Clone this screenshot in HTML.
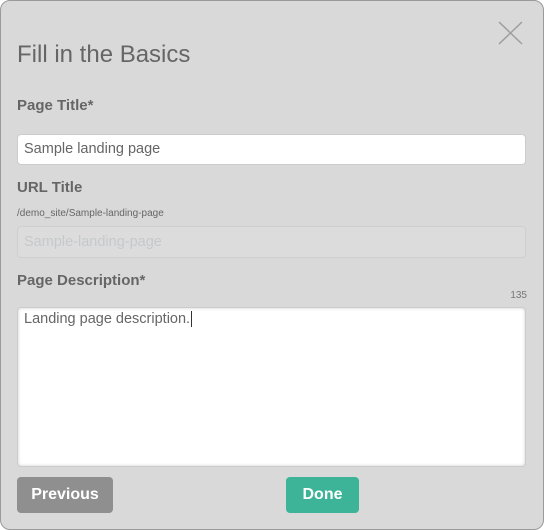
<!DOCTYPE html>
<html><head><style>
*{box-sizing:border-box;margin:0;padding:0}
body{width:544px;height:530px;background:#fff;font-family:"Liberation Sans",Arial,sans-serif;overflow:hidden}
.m{position:absolute;left:0;top:0;width:544px;height:530px;background:#d9d9d9;border:1px solid #9a9a9a;border-radius:10px}
.a{position:absolute}
h1{position:absolute;left:16px;top:40px;font-size:24px;font-weight:normal;color:#666}
.l{position:absolute;left:16px;font-size:15px;font-weight:bold;color:#666}
.in{position:absolute;left:16px;width:509px;border:1px solid #ccc;border-radius:4px;background:#fff;font-size:14.5px;color:#666;padding-left:6px}
.btn{position:absolute;top:476px;height:36px;border-radius:4px;color:#fff;font-weight:bold;font-size:16px;text-align:center;line-height:36px}
</style></head><body>
<div class="m">
<svg class="a" style="left:497px;top:20px" width="26" height="24"><path d="M1 1L24 23M24 1L1 23" stroke="#9e9e9e" stroke-width="1.5"/></svg>
<h1>Fill in the Basics</h1>
<div class="l" style="top:96px">Page Title*</div>
<div class="in" style="top:133px;height:31px;line-height:29px">Sample landing page</div>
<div class="l" style="top:178px">URL Title</div>
<div class="a" style="left:16px;top:207px;font-size:10px;color:#666">/demo_site/Sample-landing-page</div>
<div class="in" style="top:225px;height:32px;line-height:30px;background:#dcdcdc;color:#c6c9cb;border-color:#cfcfcf">Sample-landing-page</div>
<div class="l" style="top:271px">Page Description*</div>
<div class="a" style="right:16px;top:289px;font-size:10px;color:#777">135</div>
<div class="in" style="top:306px;height:160px;line-height:20px;padding-top:1px;box-shadow:inset 0 0 3px rgba(0,0,0,.2)">Landing page description.<span style="border-left:1px solid #333;margin-left:1px"></span></div>
<div class="btn" style="left:16px;width:96px;background:#8f8f8f">Previous</div>
<div class="btn" style="left:285px;width:73px;background:#3db497">Done</div>
</div>
</body></html>
